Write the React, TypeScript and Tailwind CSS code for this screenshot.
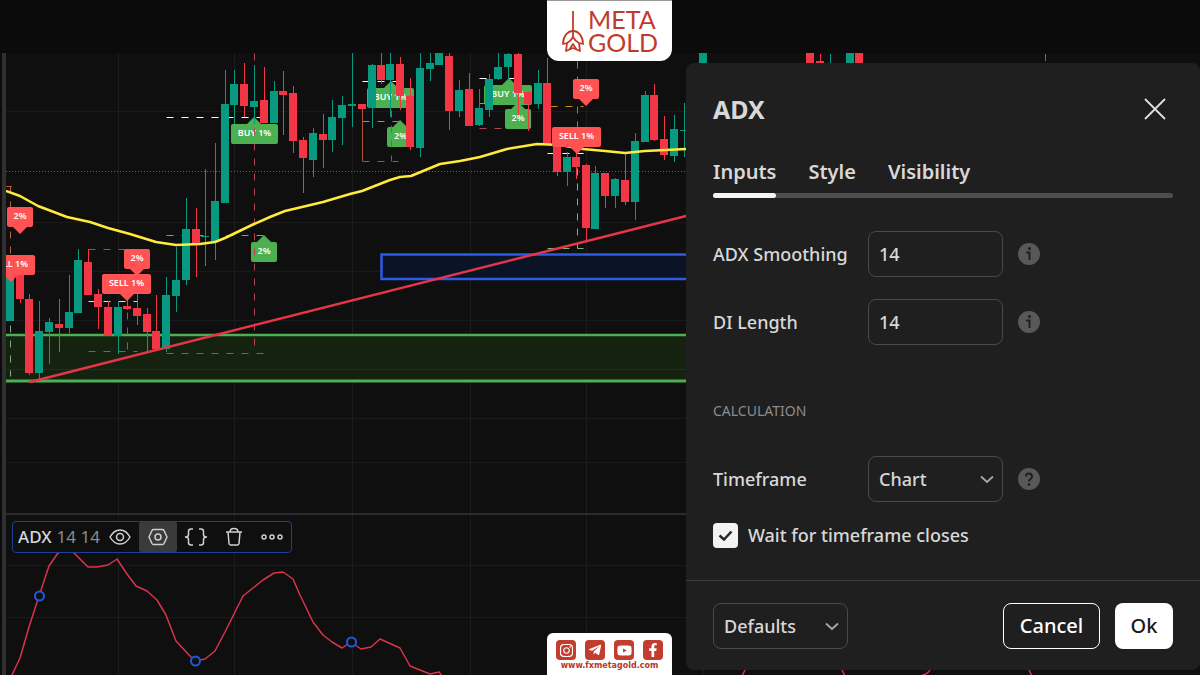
import React, { useState } from 'react';
import { FaFacebookF, FaInstagram, FaTelegramPlane, FaYoutube } from 'react-icons/fa';

const UP = '#089981';
const DOWN = '#f23645';

type Dir = 'u' | 'd';
// x, body top, body bottom, wick top, wick bottom, direction
type Candle = [number, number, number, number, number, Dir];

const CANDLES: Candle[] = [
  [10, 271, 321, 271, 321, 'u'],
  [20, 272, 299, 272, 303, 'd'],
  [29, 299, 373, 294, 375, 'd'],
  [39, 331, 373, 301, 380, 'u'],
  [49, 322, 332, 318, 364, 'u'],
  [59, 324, 328, 299, 352, 'd'],
  [69, 312, 328, 275, 333, 'u'],
  [78, 260, 313, 249, 313, 'u'],
  [88, 262, 295, 249, 295, 'd'],
  [98, 294, 307, 289, 329, 'd'],
  [108, 307, 336, 301, 336, 'd'],
  [118, 307, 336, 301, 354, 'u'],
  [127, 306, 309, 290, 310, 'd'],
  [137, 308, 316, 275, 325, 'd'],
  [147, 314, 332, 308, 353, 'd'],
  [156, 331, 349, 295, 349, 'd'],
  [166, 295, 349, 277, 352, 'u'],
  [176, 280, 296, 247, 312, 'u'],
  [186, 229, 280, 198, 285, 'u'],
  [196, 229, 243, 208, 277, 'd'],
  [205, 236, 237, 169, 266, 'u'],
  [215, 201, 242, 143, 260, 'u'],
  [225, 104, 203, 70, 203, 'u'],
  [234, 84, 105, 70, 124, 'u'],
  [244, 84, 106, 63, 117, 'd'],
  [254, 101, 107, 65, 124, 'u'],
  [264, 100, 123, 67, 123, 'd'],
  [274, 91, 123, 81, 123, 'u'],
  [283, 91, 95, 71, 135, 'd'],
  [293, 93, 141, 86, 153, 'd'],
  [303, 140, 158, 137, 193, 'd'],
  [313, 133, 160, 128, 177, 'u'],
  [323, 134, 140, 114, 168, 'd'],
  [332, 117, 140, 100, 152, 'u'],
  [342, 105, 118, 96, 145, 'u'],
  [352, 104, 106, 53, 127, 'u'],
  [362, 104, 109, 104, 109, 'd'],
  [372, 65, 108, 64, 128, 'u'],
  [381, 65, 80, 53, 84, 'd'],
  [390, 64, 80, 53, 117, 'u'],
  [400, 64, 96, 57, 110, 'd'],
  [410, 96, 147, 78, 150, 'd'],
  [420, 68, 148, 53, 157, 'u'],
  [430, 63, 69, 53, 81, 'u'],
  [439, 53, 65, 53, 65, 'u'],
  [449, 56, 111, 53, 130, 'd'],
  [459, 90, 111, 80, 117, 'u'],
  [469, 89, 126, 73, 126, 'd'],
  [479, 108, 125, 89, 126, 'u'],
  [489, 79, 110, 74, 117, 'u'],
  [498, 67, 79, 53, 80, 'u'],
  [508, 54, 67, 53, 80, 'u'],
  [518, 54, 93, 53, 115, 'd'],
  [528, 92, 104, 91, 131, 'd'],
  [538, 83, 104, 70, 109, 'u'],
  [547, 83, 144, 58, 144, 'd'],
  [557, 144, 172, 144, 176, 'd'],
  [567, 157, 172, 152, 186, 'u'],
  [576, 157, 167, 152, 179, 'd'],
  [586, 165, 228, 164, 240, 'd'],
  [595, 173, 229, 166, 229, 'u'],
  [605, 173, 196, 173, 208, 'd'],
  [615, 179, 196, 178, 208, 'u'],
  [625, 180, 202, 152, 205, 'd'],
  [635, 141, 202, 133, 220, 'u'],
  [645, 95, 142, 91, 142, 'u'],
  [654, 95, 140, 84, 141, 'd'],
  [664, 139, 155, 116, 160, 'd'],
  [674, 129, 156, 115, 162, 'u'],
  [684, 130, 131, 103, 157, 'u'],
  [703, 53, 80, 53, 80, 'u'],
  [810, 53, 80, 53, 80, 'd'],
  [820, 61, 63, 54, 63, 'd'],
  [830, 70, 72, 54, 63, 'u'],
  [850, 53, 80, 53, 80, 'u'],
  [859, 53, 80, 53, 80, 'd'],
  [1045, 70, 72, 54, 61, 'u'],
];

interface Tag {
  x: number;
  y: number;
  w: number;
  tip: number;
  text: string;
}

const BUY_TAGS: Tag[] = [
  { x: 231, y: 124, w: 47, tip: 254, text: 'BUY 1%' },
  { x: 251, y: 242, w: 26, tip: 264, text: '2%' },
  { x: 367, y: 88, w: 47, tip: 391, text: 'BUY 1%' },
  { x: 387, y: 127, w: 27, tip: 400, text: '2%' },
  { x: 484, y: 85, w: 48, tip: 509, text: 'BUY 1%' },
  { x: 505, y: 109, w: 26, tip: 518, text: '2%' },
];

const SELL_TAGS: Tag[] = [
  { x: 7, y: 207, w: 26, tip: 20, text: '2%' },
  { x: -14, y: 255, w: 49, tip: 11, text: 'SELL 1%' },
  { x: 124, y: 249, w: 26, tip: 137, text: '2%' },
  { x: 102, y: 274, w: 49, tip: 127, text: 'SELL 1%' },
  { x: 573, y: 79, w: 26, tip: 586, text: '2%' },
  { x: 552, y: 127, w: 49, tip: 577, text: 'SELL 1%' },
];

// stroke, x1, y1, x2, y2
const GUIDES: [string, number, number, number, number][] = [
  ['#ffffff', 166, 117, 262, 117],
  ['#c98a16', 166, 235, 263, 235],
  ['#b04650', 254, 53, 254, 350],
  ['#b04650', 166, 353, 263, 353],
  ['#b8603a', 10, 186, 10, 255],
  ['#7fae85', 10, 325, 10, 376],
  ['#b04650', 88, 249, 125, 249],
  ['#e0e0e0', 88, 301, 137, 301],
  ['#4d7d52', 88, 351, 137, 351],
  ['#4d7d52', 127, 312, 127, 351],
  ['#ffffff', 362, 81, 400, 81],
  ['#c98a16', 362, 121, 398, 121],
  ['#b04650', 362, 161, 398, 161],
  ['#b04650', 391, 110, 391, 161],
  ['#ffffff', 479, 78, 515, 78],
  ['#c98a16', 479, 103, 485, 103],
  ['#b04650', 479, 128, 502, 128],
  ['#ffffff', 547, 153, 583, 153],
  ['#c98a16', 550, 106, 583, 106],
  ['#e0525e', 577, 61, 577, 127],
  ['#6fbf73', 577, 168, 577, 248],
  ['#6fbf73', 547, 248, 583, 248],
];

const MOVING_AVERAGE =
  '6,191 20,196 38,206 67,217 90,222 108,228 130,234 156,242 176,245 200,244 215,242 225,238 254,224 270,217 285,211 302,207 323,202 350,194 362,191 390,180 400,177 411,176 440,164 460,161 480,157 507,149 537,144 560,145 583,149 605,151 625,153 645,151 686,149';

const ADX_LINE =
  '12,675 20,658 29,627 39,596 49,566 58,553 66,549 73,552 88,567 97,567 108,565 117,559 127,574 136,586 147,591 157,600 166,615 176,641 189,655 195,661 205,659 215,651 225,632 243,596 263,580 274,573 283,572 293,579 300,595 313,622 323,635 332,642 342,648 351,642 361,649 371,647 380,639 400,648 410,666 430,674 439,672 442,676';

const GRID_X = [118, 234, 352, 470, 586, 703];

function Tags({ tags, color, down }: { tags: Tag[]; color: string; down?: boolean }) {
  return (
    <>
      {tags.map((t) => {
        const base = down ? t.y + 19 : t.y + 1;
        const apex = down ? t.y + 27 : t.y - 7;
        return (
          <g key={`${t.x}-${t.y}`}>
            <rect x={t.x} y={t.y} width={t.w} height="20" rx="2" fill={color} />
            <polygon points={`${t.tip - 8},${base} ${t.tip},${apex} ${t.tip + 8},${base}`} fill={color} />
            <text x={t.x + t.w / 2} y={t.y + 12} textAnchor="middle" className="fill-white text-[9px] font-semibold">
              {t.text}
            </text>
          </g>
        );
      })}
    </>
  );
}

function PriceChart() {
  return (
    <svg className="block h-[460px] w-full bg-[#0f0f0f]" role="img" aria-label="Price chart">
      <g transform="translate(-6 -53)">
        {GRID_X.map((x) => (
          <line key={x} x1={x + 0.5} x2={x + 0.5} y1="53" y2="514" stroke="#1c1c1c" />
        ))}
        {[111, 222, 271, 320, 369, 418, 462].map((y) => (
          <line key={y} x1="0" x2="3000" y1={y + 0.5} y2={y + 0.5} stroke="#1a1a1a" />
        ))}

        {/* Demand zone */}
        <rect x="0" y="335" width="3000" height="46" fill="#14220f" />
        <line x1="0" x2="3000" y1="369.5" y2="369.5" stroke="#2a2c1a" />
        <line x1="0" x2="3000" y1="335" y2="335" stroke="#4caf50" strokeWidth="2.5" />
        <line x1="0" x2="3000" y1="381" y2="381" stroke="#4caf50" strokeWidth="3" />

        <rect x="381.5" y="254.5" width="2600" height="24.5" fill="#0b1426" stroke="#2c5be6" strokeWidth="2.5" />
        <line x1="0" x2="3000" y1="171.5" y2="171.5" stroke="#80555a" strokeDasharray="1 2" />

        <Tags tags={BUY_TAGS} color="#4caf50" />
        {GUIDES.map(([stroke, x1, y1, x2, y2]) => (
          <line
            key={`${x1}-${y1}-${x2}-${y2}`}
            x1={x1 + 0.5}
            y1={y1 + 0.5}
            x2={x2 + 0.5}
            y2={y2 + 0.5}
            stroke={stroke}
            strokeDasharray="7 8"
          />
        ))}
        <path d="M362.5 109V161M6 186.5h6" stroke="#b0543c" fill="none" />

        {CANDLES.map(([x, top, bottom, high, low, dir]) => (
          <g key={x} fill={dir === 'u' ? UP : DOWN}>
            <rect x={x} y={high} width="1" height={low - high} />
            <rect x={x - 4} y={top} width="8" height={bottom - top} />
          </g>
        ))}

        <polyline points={MOVING_AVERAGE} fill="none" stroke="#ffeb3b" strokeWidth="2.5" strokeLinejoin="round" />
        <line x1="30" y1="382" x2="686" y2="216" stroke="#e63548" strokeWidth="2.5" strokeLinecap="round" />
        <Tags tags={SELL_TAGS} color="#ff5252" down />
      </g>
    </svg>
  );
}

function AdxChart() {
  return (
    <svg className="absolute inset-0 h-full w-full" role="img" aria-label="ADX indicator">
      <g transform="translate(-6 -515)">
        {GRID_X.map((x) => (
          <line key={x} x1={x + 0.5} x2={x + 0.5} y1="515" y2="1200" stroke="#1c1c1c" />
        ))}
        <path d="M0 565.5H3000M0 617.5H3000" stroke="#1a1a1a" />
        <polyline points={ADX_LINE} fill="none" stroke="#d6354a" strokeWidth="1.5" strokeLinejoin="round" />
        <path
          d="M742 676L745 670M842 670L845 676M920 676Q928 674 930 670M1029 670L1032 676"
          fill="none"
          stroke="#d6354a"
          strokeWidth="1.5"
        />
        {[
          [39.5, 596],
          [195.5, 661],
          [351.5, 642],
        ].map(([cx, cy]) => (
          <circle key={cx} cx={cx} cy={cy} r="4.5" fill="#0f0f0f" stroke="#2157e0" strokeWidth="2" />
        ))}
      </g>
    </svg>
  );
}

function IndicatorToolbar() {
  const button = 'flex h-full w-[38px] items-center justify-center';
  const icon = {
    width: 24,
    height: 24,
    viewBox: '0 0 24 24',
    fill: 'none',
    stroke: '#cfcfcf',
    strokeWidth: 1.5,
    strokeLinejoin: 'round' as const,
  };
  return (
    <div className="relative mt-[6px] ml-[6px] flex h-8 w-fit items-center rounded border border-[#1f3f96] bg-[#0f0f0f] pl-[5px] text-[17px] leading-8">
      <span className="font-medium text-[#d6d6d6]">ADX</span>
      <span className="ml-[5px] w-[44px] text-[#8a8a8a]">14 14</span>
      <button type="button" aria-label="Hide" className={button}>
        <svg {...icon}>
          <path d="M2 12C4.500 7.500 8 5 12 5s7.500 2.500 10 7c-2.500 4.500-6 7-10 7s-7.500-2.500-10-7Z" />
          <circle cx="12" cy="12" r="3.500" />
        </svg>
      </button>
      <button type="button" aria-label="Settings" className={`${button} rounded-xs bg-[#3a3a3a]`}>
        <svg {...icon}>
          <path d="M7.500 4.500h9Q17.500 4.500 18 5.500L21 12L18 18.500Q17.500 19.500 16.500 19.500H7.500Q6.500 19.500 6 18.500L3 12L6 5.500Q6.500 4.500 7.500 4.500Z" />
          <circle cx="12" cy="12" r="3" />
        </svg>
      </button>
      <button type="button" aria-label="Source code" className={button}>
        <svg {...icon}>
          <path d="M9 4H7Q4.500 4 4.500 6.500V9.500Q4.500 12 1.500 12Q4.500 12 4.500 14.500V17.500Q4.500 20 7 20H9M15 4h2Q19.500 4 19.500 6.500V9.500Q19.500 12 22.500 12Q19.500 12 19.500 14.500V17.500Q19.500 20 17 20H15" />
        </svg>
      </button>
      <button type="button" aria-label="Remove" className={button}>
        <svg {...icon}>
          <path d="M4 7h16M6 7l1 11.500q.2 1.500 1.500 1.500h7q1.300 0 1.500-1.500L18 7M8 7q0-3.500 4-3.500T16 7" />
        </svg>
      </button>
      <button type="button" aria-label="More" className={button}>
        <svg {...icon}>
          <circle cx="4" cy="12" r="2" />
          <circle cx="12" cy="12" r="2" />
          <circle cx="20" cy="12" r="2" />
        </svg>
      </button>
    </div>
  );
}

function Logo() {
  return (
    <header className="absolute top-0 left-1/2 z-10 flex h-[61px] w-[125px] -translate-x-[53px] items-center rounded-b-xl border-t border-[#9a9a9a] bg-white pl-[14px] text-[#bf3c2c]">
      <svg width="24" height="44" viewBox="0 0 24 44" fill="none" stroke="currentColor" strokeWidth="1.800" strokeLinejoin="round">
        <path d="M12 2V29" />
        <path d="M6 34L2 35C2 28 6 22 12 22S22 28 22 35L18 34" />
        <path d="M6 34L5 42L12 39L19 42L18 34" />
        <path d="M6 34Q10 32 12 28Q14 32 18 34M8.500 40.500L12 35L15.500 40.500" />
      </svg>
      <div className="ml-[3px] font-['Lato',sans-serif] text-[25px] leading-[23px]">
        <div>META</div>
        <div>GOLD</div>
      </div>
    </header>
  );
}

function SocialCard() {
  const badge = 'flex size-5 items-center justify-center rounded bg-[#c23d2d] text-white';
  return (
    <footer className="absolute bottom-0 left-1/2 z-10 h-[42px] w-[125px] -translate-x-[53px] rounded-t-md bg-white pt-[7px]">
      <nav className="flex justify-center gap-[9px]">
        <a href="#instagram" aria-label="Instagram" className={badge}>
          <FaInstagram size={15} />
        </a>
        <a href="#telegram" aria-label="Telegram" className={badge}>
          <FaTelegramPlane size={14} />
        </a>
        <a href="#youtube" aria-label="YouTube" className={badge}>
          <FaYoutube size={15} />
        </a>
        <a href="#facebook" aria-label="Facebook" className={badge}>
          <FaFacebookF size={14} />
        </a>
      </nav>
      <a
        href="#site"
        className="block text-center font-['DejaVu_Sans',sans-serif] text-[8px] leading-[11px] font-bold text-[#b5382a]"
      >
        www.fxmetagold.com
      </a>
    </footer>
  );
}

function InfoIcon() {
  return (
    <svg width="22" height="22" viewBox="0 0 22 22" aria-hidden="true">
      <circle cx="11" cy="11" r="11" fill="#585858" />
      <circle cx="11.500" cy="5.500" r="1.500" fill="#1f1f1f" />
      <path d="M8 9.500h3.500V17" fill="none" stroke="#1f1f1f" strokeWidth="2" />
    </svg>
  );
}

function HelpIcon() {
  return (
    <svg width="22" height="22" viewBox="0 0 22 22" aria-hidden="true">
      <circle cx="11" cy="11" r="11" fill="#585858" />
      <path d="M8 8.500Q8 5.500 11 5.500T14 8.500Q14 10 12.500 11T11 13.500" fill="none" stroke="#1f1f1f" strokeWidth="2" />
      <circle cx="11" cy="16.500" r="1.300" fill="#1f1f1f" />
    </svg>
  );
}

function Select({ id, label, options }: { id: string; label?: string; options: string[] }) {
  return (
    <div className="relative w-[135px]">
      <select
        id={id}
        aria-label={label}
        className="block h-[46px] w-full appearance-none rounded-lg border border-[#4a4a4a] bg-transparent px-[10px] outline-none"
      >
        {options.map((o) => (
          <option key={o} className="bg-[#1f1f1f]">
            {o}
          </option>
        ))}
      </select>
      <svg
        className="pointer-events-none absolute top-[19px] right-[9px]"
        width="14"
        height="9"
        viewBox="0 0 14 9"
        fill="none"
        stroke="#a8a8a8"
        strokeWidth="1.800"
      >
        <path d="M1 1.500L7 7L13 1.500" />
      </svg>
    </div>
  );
}

const FIELD_ROW = 'grid grid-cols-[140px_135px_auto] items-center justify-start gap-x-[15px]';
const TABS = ['Inputs', 'Style', 'Visibility'];

function SettingsDialog() {
  const [tab, setTab] = useState('Inputs');
  return (
    <section
      role="dialog"
      aria-label="ADX settings"
      className="absolute top-[63px] right-0 z-20 w-[514px] max-w-full rounded-lg bg-[#1f1f1f] text-[18px] font-medium text-[#d8d8d8]"
    >
      <div className="flex items-center justify-between px-[27px] pt-7">
        <h1 className="text-[25px] leading-9 font-bold">ADX</h1>
        <button type="button" aria-label="Close" className="mr-[7px]">
          <svg width="22" height="22" viewBox="0 0 22 22" stroke="#e0e0e0" strokeWidth="1.800">
            <path d="M1 1L21 21M21 1L1 21" />
          </svg>
        </button>
      </div>

      <div className="relative mx-[27px] mt-[31px] text-[20px] leading-7 font-semibold">
        <div className="absolute inset-x-0 bottom-0 h-[5px] rounded-full bg-[#4d4d4d]" />
        <div className="relative flex gap-8">
          {TABS.map((name) => (
            <button key={name} type="button" onClick={() => setTab(name)}>
              {name}
              <span className={`mt-[7px] block h-[5px] rounded-full ${tab === name ? 'bg-[#f5f5f5]' : ''}`} />
            </button>
          ))}
        </div>
      </div>

      <div className="px-[27px] pt-[33px]">
        <div className="flex flex-col gap-[22px]">
          <div className={FIELD_ROW}>
            <label htmlFor="smoothing">ADX Smoothing</label>
            <input
              id="smoothing"
              defaultValue="14"
              className="h-[46px] w-full rounded-lg border border-[#4a4a4a] bg-transparent px-[10px] outline-none"
            />
            <InfoIcon />
          </div>
          <div className={FIELD_ROW}>
            <label htmlFor="length">DI Length</label>
            <input
              id="length"
              defaultValue="14"
              className="h-[46px] w-full rounded-lg border border-[#4a4a4a] bg-transparent px-[10px] outline-none"
            />
            <InfoIcon />
          </div>
        </div>

        <h2 className="mt-14 text-[14px] leading-5 font-normal text-[#8c8c8c]">CALCULATION</h2>

        <div className={`${FIELD_ROW} mt-[35px]`}>
          <label htmlFor="timeframe">Timeframe</label>
          <Select id="timeframe" options={['Chart', '1 hour', '1 day']} />
          <HelpIcon />
        </div>

        <label className="mt-5 flex items-center gap-[10px]">
          <span className="relative flex size-[25px]">
            <input type="checkbox" defaultChecked className="peer size-[25px] appearance-none rounded bg-[#555] checked:bg-[#f2f2f2]" />
            <svg
              className="pointer-events-none absolute inset-0 hidden peer-checked:block"
              width="25"
              height="25"
              viewBox="0 0 25 25"
              fill="none"
              stroke="#262626"
              strokeWidth="2.500"
            >
              <path d="M6.500 12.500L11 16.500L18.500 8.500" />
            </svg>
          </span>
          Wait for timeframe closes
        </label>
      </div>

      <div className="mt-[31px] flex items-center border-t border-[#3d3d3d] px-[27px] pt-[22px] pb-[21px]">
        <Select id="defaults" label="Defaults" options={['Defaults', 'Reset settings', 'Save as default']} />
        <button type="button" className="ml-auto h-[46px] w-[97px] rounded-lg border border-white text-[20px] text-white">
          Cancel
        </button>
        <button type="button" className="ml-[15px] h-[46px] w-[58px] rounded-lg bg-white text-[20px] text-[#1a1a1a]">
          Ok
        </button>
      </div>
    </section>
  );
}

const App: React.FC = () => {
  return (
    <main className="relative flex min-h-screen flex-col overflow-hidden bg-[#0b0b0b] pt-[53px] font-['Noto_Sans',sans-serif]">
      <Logo />
      <div className="flex grow">
        <div className="ml-[2px] w-1 shrink-0 bg-[#303030]" />
        <div className="flex min-w-0 grow flex-col">
          <PriceChart />
          <div className="h-[2px] bg-[#2c2c2c]" />
          <div className="relative grow bg-[#0f0f0f]">
            <AdxChart />
            <IndicatorToolbar />
          </div>
        </div>
      </div>
      <SettingsDialog />
      <SocialCard />
    </main>
  );
};

export default App;
